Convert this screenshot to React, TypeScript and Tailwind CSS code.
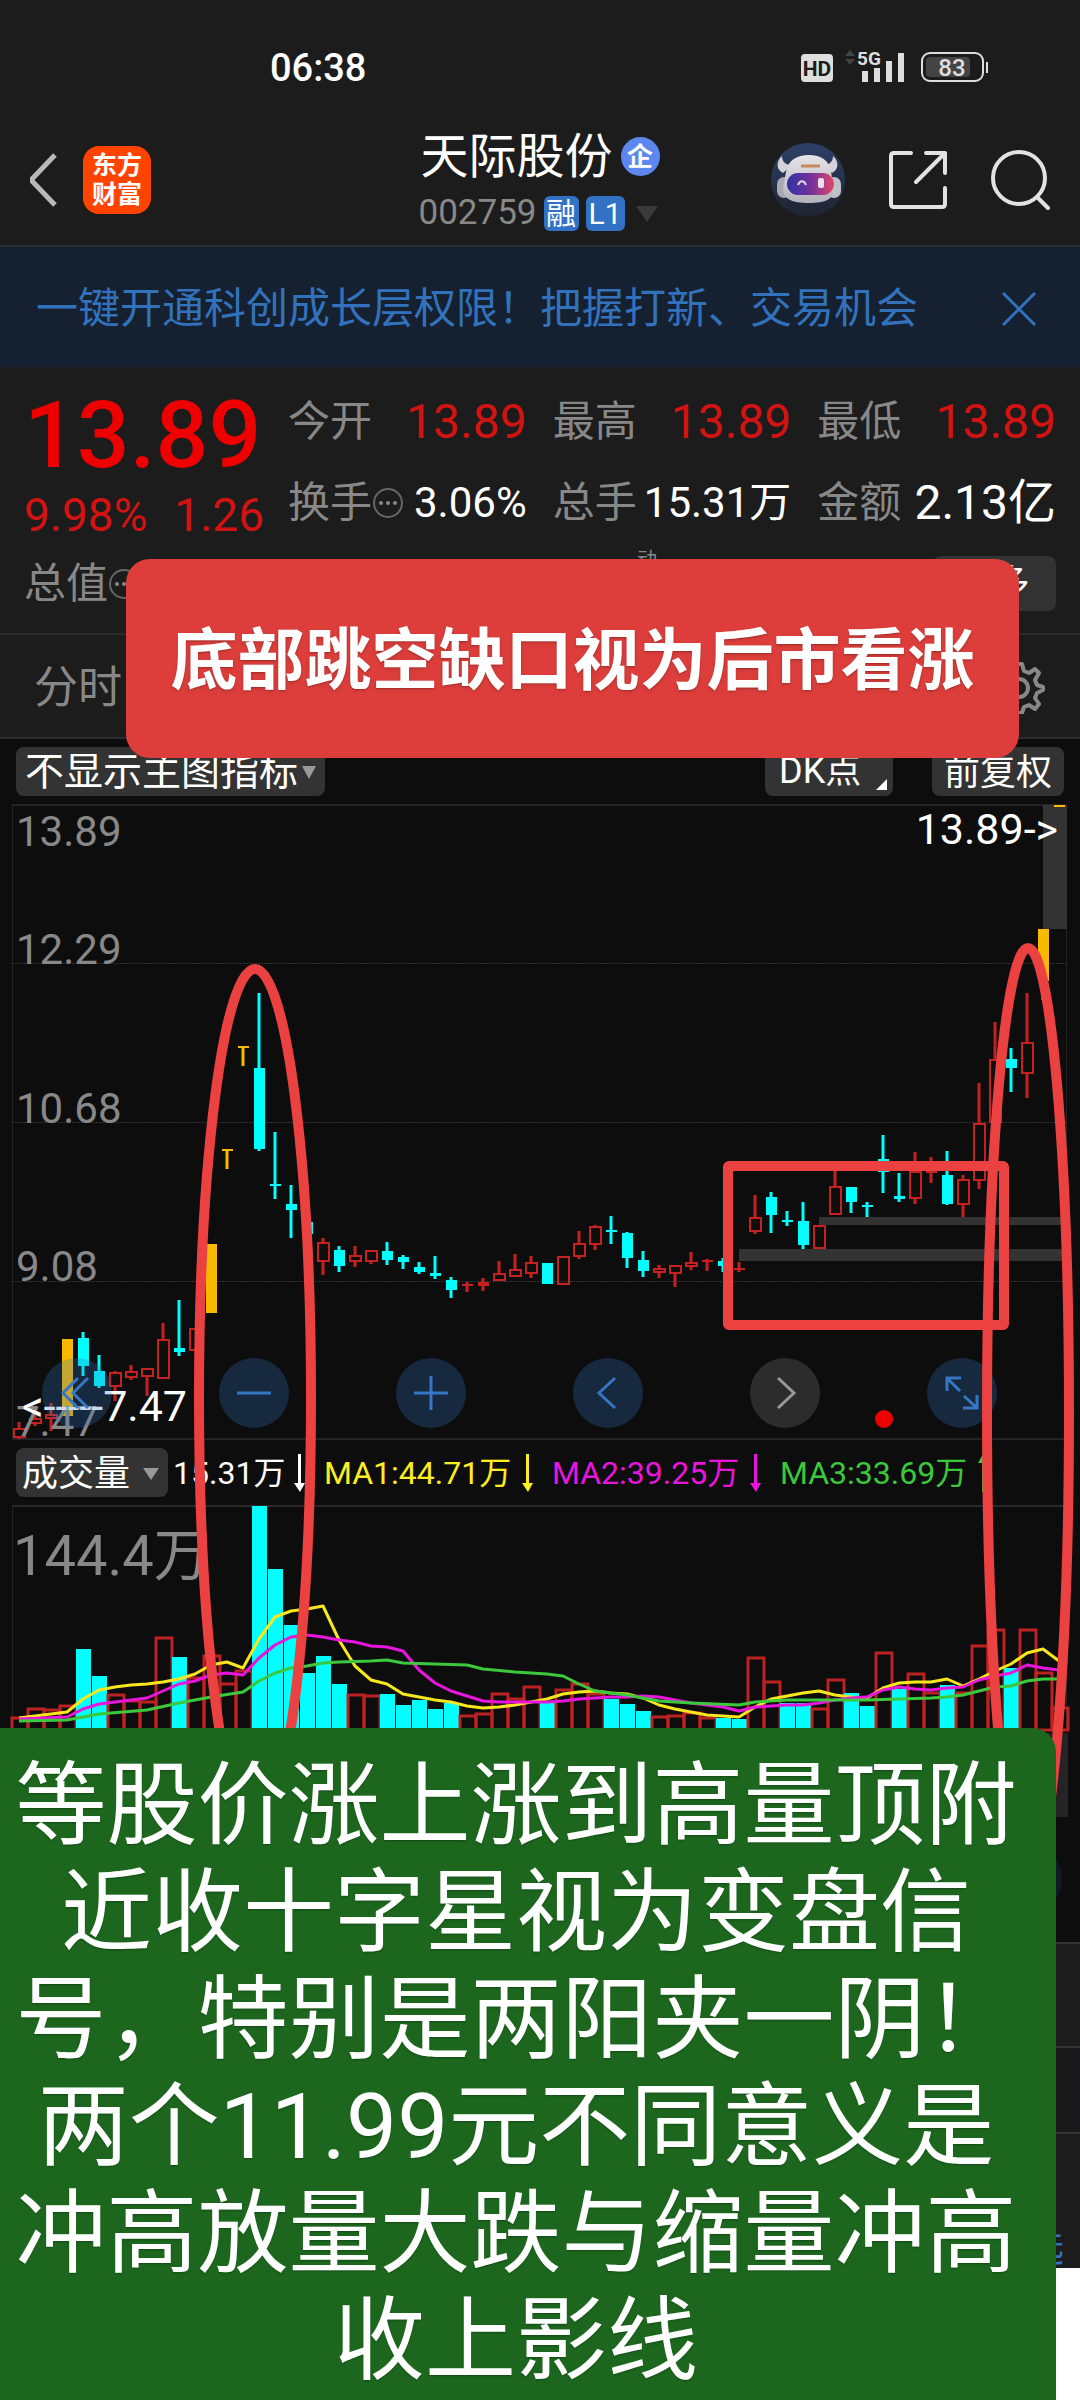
import type { ReactNode } from "react";

type Kind = "up" | "down" | "limit";

// kind, high, body top, body bottom, low, volume top
type Candle = [Kind, number, number, number, number, number];

const candles: Candle[] = [
  ["up", 1422, 1428, 1438, 1439, 1717],
  ["up", 1413, 1418, 1424, 1426, 1708],
  ["up", 1403, 1414, 1419, 1431, 1709],
  ["limit", 1339, 1339, 1416, 1416, 1705],
  ["down", 1332, 1338, 1366, 1376, 1649],
  ["down", 1355, 1371, 1386, 1388, 1676],
  ["up", 1371, 1372, 1387, 1401, 1694],
  ["up", 1365, 1371, 1378, 1380, 1700],
  ["up", 1368, 1368, 1377, 1396, 1701],
  ["up", 1323, 1339, 1379, 1379, 1637],
  ["down", 1300, 1348, 1352, 1356, 1657],
  ["up", 1328, 1328, 1351, 1351, 1677],
  ["limit", 1244, 1244, 1313, 1313, 1655],
  ["limit", 1149, 1149, 1151, 1169, 1683],
  ["limit", 1046, 1046, 1048, 1066, 1670],
  ["down", 993, 1068, 1149, 1151, 1506],
  ["down", 1132, 1184, 1186, 1199, 1569],
  ["down", 1185, 1204, 1210, 1238, 1625],
  ["down", 1222, 1222, 1234, 1234, 1673],
  ["up", 1238, 1242, 1262, 1275, 1656],
  ["down", 1246, 1250, 1266, 1272, 1684],
  ["up", 1246, 1255, 1262, 1267, 1694],
  ["up", 1250, 1250, 1262, 1264, 1695],
  ["down", 1242, 1251, 1260, 1265, 1694],
  ["down", 1255, 1257, 1262, 1269, 1705],
  ["down", 1262, 1267, 1272, 1274, 1700],
  ["down", 1256, 1273, 1276, 1279, 1709],
  ["down", 1277, 1280, 1290, 1298, 1703],
  ["up", 1282, 1284, 1286, 1292, 1715],
  ["up", 1278, 1282, 1286, 1291, 1713],
  ["up", 1261, 1273, 1281, 1281, 1693],
  ["up", 1254, 1269, 1277, 1277, 1698],
  ["up", 1256, 1262, 1274, 1278, 1686],
  ["down", 1263, 1263, 1284, 1284, 1703],
  ["up", 1256, 1256, 1285, 1285, 1689],
  ["up", 1231, 1243, 1257, 1259, 1683],
  ["up", 1225, 1226, 1245, 1250, 1693],
  ["down", 1216, 1230, 1232, 1244, 1699],
  ["down", 1232, 1233, 1258, 1268, 1704],
  ["down", 1251, 1260, 1271, 1277, 1711],
  ["up", 1265, 1268, 1273, 1278, 1716],
  ["up", 1265, 1265, 1274, 1287, 1715],
  ["up", 1252, 1262, 1267, 1270, 1712],
  ["up", 1259, 1260, 1262, 1271, 1717],
  ["down", 1258, 1261, 1266, 1272, 1718],
  ["down", 1262, 1268, 1270, 1272, 1719],
  ["up", 1195, 1217, 1232, 1234, 1657],
  ["up", 1192, 1197, 1215, 1233, 1681],
  ["down", 1211, 1220, 1222, 1226, 1703],
  ["down", 1202, 1221, 1245, 1249, 1703],
  ["up", 1225, 1225, 1249, 1249, 1708],
  ["up", 1169, 1186, 1215, 1215, 1679],
  ["down", 1187, 1187, 1202, 1213, 1693],
  ["down", 1202, 1205, 1207, 1217, 1706],
  ["up", 1135, 1159, 1172, 1193, 1652],
  ["down", 1173, 1196, 1199, 1202, 1689],
  ["up", 1152, 1171, 1199, 1204, 1673],
  ["up", 1157, 1171, 1173, 1183, 1692],
  ["down", 1151, 1175, 1204, 1205, 1685],
  ["up", 1175, 1179, 1205, 1217, 1692],
  ["up", 1083, 1123, 1181, 1189, 1645],
  ["up", 1022, 1059, 1123, 1123, 1629],
  ["down", 1048, 1059, 1068, 1092, 1668],
  ["up", 993, 1042, 1074, 1098, 1629],
  ["limit", 929, 929, 981, 1000, 1672],
  ["limit", 805, 805, 807, 807, 1707],
];

// sessions whose candle colour differs from the colour of their volume bar
const candleKind: Record<number, Kind> = { 45: "up", 47: "down", 54: "down" };
const volumeKind: Record<number, Kind> = { 19: "down" };

const ma1: [number, number][] = [
  [0, 1718], [3, 1712], [4, 1699], [5, 1690], [6, 1687], [7, 1685], [8, 1684], [9, 1682], [10, 1679], [11, 1674],
  [12, 1665], [13, 1662], [14, 1668], [15, 1639], [16, 1617], [17, 1611], [18, 1609], [19, 1606], [20, 1640],
  [21, 1666], [22, 1680], [23, 1684], [24, 1694], [25, 1697], [26, 1700], [27, 1702], [28, 1706], [29, 1708],
  [30, 1707], [31, 1705], [32, 1702], [33, 1699], [34, 1694], [35, 1692], [36, 1691], [37, 1693], [38, 1694],
  [39, 1698], [40, 1705], [41, 1709], [42, 1712], [43, 1715], [44, 1716], [45, 1717], [46, 1707], [47, 1699],
  [48, 1696], [49, 1693], [50, 1691], [51, 1695], [52, 1697], [53, 1698], [54, 1688], [55, 1683], [56, 1682],
  [57, 1682], [58, 1679], [59, 1686], [60, 1679], [61, 1671], [62, 1664], [63, 1653], [64, 1649], [65, 1661],
];

const ma2: [number, number][] = [
  [0, 1719], [3, 1717], [4, 1709], [5, 1704], [6, 1702], [7, 1700], [8, 1698], [9, 1691], [10, 1684], [11, 1681],
  [12, 1675], [13, 1673], [14, 1675], [15, 1658], [16, 1645], [17, 1637], [18, 1635], [19, 1637], [20, 1640],
  [21, 1642], [22, 1646], [23, 1647], [24, 1651], [25, 1670], [26, 1683], [27, 1691], [28, 1696], [29, 1701],
  [30, 1702], [33, 1702], [34, 1701], [35, 1699], [36, 1698], [37, 1697], [38, 1697], [39, 1696], [40, 1697],
  [41, 1700], [42, 1703], [43, 1705], [44, 1707], [45, 1711], [46, 1707], [47, 1706], [48, 1705], [49, 1705],
  [50, 1703], [51, 1700], [52, 1698], [53, 1697], [54, 1690], [55, 1687], [56, 1689], [57, 1690], [58, 1688],
  [59, 1687], [60, 1680], [61, 1676], [62, 1673], [63, 1665], [64, 1668], [65, 1670],
];

const ma3: [number, number][] = [
  [0, 1721], [3, 1720], [4, 1717], [5, 1714], [8, 1710], [10, 1703], [12, 1697], [14, 1692], [15, 1681], [16, 1673],
  [17, 1668], [18, 1666], [19, 1663], [20, 1662], [22, 1661], [23, 1660], [24, 1663], [26, 1664], [28, 1665],
  [29, 1669], [31, 1672], [33, 1674], [34, 1676], [35, 1684], [36, 1691], [38, 1695], [40, 1701], [42, 1703],
  [45, 1705], [46, 1702], [48, 1700], [51, 1700], [53, 1700], [55, 1699], [57, 1698], [58, 1697], [59, 1695],
  [60, 1691], [61, 1687], [62, 1686], [63, 1681], [64, 1679], [65, 1679],
];

const colors = { up: "#c62121", down: "#00ffff", limit: "#f8b900" };
const xOf = (i: number) => 19 + i * 16;
const toPoints = (line: [number, number][]) => line.map(([i, y]) => `${xOf(i)},${y}`).join(" ");

function CandleMark({ candle, index }: { candle: Candle; index: number }) {
  const [, high, top, bottom, low] = candle;
  const kind = candleKind[index] ?? candle[0];
  const x = xOf(index);
  const color = colors[kind];
  const hollow = kind === "up" && bottom - top > 4;
  return (
    <g stroke={color} strokeWidth="3" fill={color}>
      {high < top && <line x1={x} x2={x} y1={high} y2={top} />}
      {low > bottom && <line x1={x} x2={x} y1={bottom} y2={low} />}
      {hollow ? (
        <rect x={x - 5} y={top + 1} width="11" height={bottom - top - 2} fill="none" strokeWidth="2" />
      ) : (
        <rect x={x - 5} y={top} width="11" height={bottom - top} stroke="none" />
      )}
    </g>
  );
}

function PriceChart() {
  return (
    <svg viewBox="0 796 1080 644" className="block h-auto w-full overflow-visible" role="img" aria-label="日K线">
      <g stroke="#232325" strokeWidth="2" fill="none">
        <path d="M12 805H1067M12 1439H1067" />
        <path d="M12.500 805V1439M1066.500 805V1439" strokeWidth="1" />
        <path d="M12 963.500H1067M12 1122.500H1067M12 1281.500H1067" stroke="#333" strokeWidth="1" strokeDasharray="2 1" />
      </g>
      <g fill="#333">
        <rect x="1043" y="805" width="24" height="124" />
        <rect x="819" y="1217" width="248" height="8" />
        <rect x="739" y="1249" width="328" height="12" />
      </g>
      {candles.map((c, i) => (
        <CandleMark key={i} candle={c} index={i} />
      ))}
      <g fill="#888" fontSize="42">
        <text x="16" y="846">13.89</text>
        <text x="16" y="964">12.29</text>
        <text x="16" y="1123">10.68</text>
        <text x="16" y="1281">9.08</text>
        <text x="16" y="1436">7.47</text>
      </g>
      <g fill="#fff" fontSize="43" textAnchor="end">
        <text x="1058" y="844">13.89-&gt;</text>
        <text x="187" y="1421">&lt;-----7.47</text>
      </g>
      <circle cx="884" cy="1419" r="9" fill="#e00" />
    </svg>
  );
}

function VolumeChart() {
  return (
    <svg viewBox="0 1497 1080 445" className="block h-auto w-full" role="img" aria-label="成交量">
      <path d="M12 1506H1067" stroke="#29292b" strokeWidth="2" />
      <path d="M12.500 1506V1731M1066.500 1506V1731" stroke="#232325" />
      <rect x="12" y="1733" width="1056" height="84" fill="#242426" />
      <circle cx="1027" cy="1879" r="35" fill="#101a26" />
      <text x="13" y="1575" fontSize="56" fill="#888">144.4万</text>
      {candles.map(([kind, , , , , top], i) =>
        (volumeKind[i] ?? kind) === "down" ? (
          <rect key={i} x={xOf(i) - 7} y={top} width="15" height={1731 - top} fill="#00ffff" />
        ) : (
          <rect key={i} x={xOf(i) - 7} y={top + 1} width="16" height={1729 - top} fill="none" stroke="#bd2222" strokeWidth="3" />
        ),
      )}
      <g fill="none" strokeWidth="3" strokeLinejoin="round">
        <polyline points={toPoints(ma1)} stroke="#f8e71c" />
        <polyline points={toPoints(ma2)} stroke="#e815dc" />
        <polyline points={toPoints(ma3)} stroke="#3cc83c" />
      </g>
    </svg>
  );
}

// hand-drawn marks over both charts
function Annotations() {
  return (
    <svg viewBox="0 739 1080 1203" className="pointer-events-none absolute inset-x-0 top-0 h-auto w-full" aria-hidden="true">
      <g fill="none" stroke="#ec4141" strokeWidth="10">
        <ellipse cx="255" cy="1398" rx="56" ry="429" />
        <ellipse cx="1028" cy="1412" rx="41" ry="464" />
        <rect x="728" y="1166" width="276" height="159" rx="1" strokeLinejoin="round" />
      </g>
    </svg>
  );
}

function StatusBar() {
  return (
    <div className="flex items-center justify-between pt-[46px] pr-[92px] pl-[270px]">
      <time className="text-[38px] leading-[44px] font-medium text-white">06:38</time>
      <svg width="188" height="44" viewBox="0 0 188 44" className="text-[#dedede]" role="img" aria-label="HD 5G 83">
        <rect x="1" y="8" width="32" height="28" rx="4" fill="currentColor" />
        <text x="17" y="30" fontSize="21" fontWeight="700" fill="#1c1c1c" textAnchor="middle">HD</text>
        <path d="M45 10l5-6 5 6zM45 13l5 6 5-6z" fill="#444" />
        <text x="57" y="19" fontSize="19" fontWeight="700" fill="currentColor">5G</text>
        <path d="M65 25v11M77 22v14M89 15v21M101 7v29" stroke="currentColor" strokeWidth="6" />
        <rect x="122" y="7" width="61" height="28" rx="8" fill="none" stroke="currentColor" strokeWidth="2" />
        <rect x="126" y="11" width="44" height="20" rx="4" fill="#444" />
        <text x="152" y="30" fontSize="24" fontWeight="500" fill="currentColor" textAnchor="middle">83</text>
        <path d="M187 16v11" stroke="currentColor" strokeWidth="2" />
      </svg>
    </div>
  );
}

function RobotIcon() {
  return (
    <svg width="76" height="76" viewBox="0 0 76 76" aria-hidden="true">
      <defs>
        <linearGradient id="halo" x1="0" y1="0" x2="0" y2="1">
          <stop offset="0" stopColor="#2e4068" />
          <stop offset="1" stopColor="#1e2330" />
        </linearGradient>
        <linearGradient id="visor">
          <stop offset="0" stopColor="#3033a0" />
          <stop offset="50%" stopColor="#74309c" />
          <stop offset="1" stopColor="#e04a68" />
        </linearGradient>
        <linearGradient id="shell" x1="0" y1="0" x2="0" y2="1">
          <stop offset="0" stopColor="#e6e4e8" />
          <stop offset="1" stopColor="#b4b2ba" />
        </linearGradient>
      </defs>
      <circle cx="38" cy="38" r="37" fill="url(#halo)" />
      <path d="M12 14c-5 4-7 13 1 17l9-8c-6 0-10-3-10-9zM63 14c5 4 7 13-1 17l-9-8c6 0 10-3 10-9z" fill="#d4d2d8" />
      <rect x="7" y="35" width="14" height="21" rx="7" fill="#aaa8b2" />
      <rect x="57" y="35" width="14" height="21" rx="7" fill="#c2c0c8" />
      <path d="M16 30c2-12 11-17 23-17s20 5 22 17l3 16c0 11-8 15-25 15s-26-4-26-15z" fill="url(#shell)" />
      <rect x="17" y="31" width="47" height="22" rx="11" fill="url(#visor)" />
      <path d="M31 24h19" stroke="#c58a5c" strokeWidth="3" />
      <path d="M28 43c2-5 6-5 8 0" fill="none" stroke="#ddd" strokeWidth="2" />
      <rect x="48" y="36" width="6" height="10" rx="2" fill="#e6e0f0" />
    </svg>
  );
}

function Header() {
  return (
    <header className="border-b-2 border-[#2b2f33] bg-[#1c1c1c]">
      <StatusBar />
      <div className="grid h-[155px] grid-cols-[1fr_auto_1fr] items-center px-[30px]">
        <div className="flex items-center gap-[25px] pt-6">
          <button type="button" aria-label="返回">
            <svg width="28" height="56" viewBox="3 0 28 56" fill="none" stroke="#b9b9b9" strokeWidth="5">
              <path d="M28 3L4 28l24 25" />
            </svg>
          </button>
          <a href="#home" className="flex size-[68px] flex-col items-center justify-center rounded-2xl bg-[#ff4400] text-[25px] leading-[29px] font-bold text-white">
            <span>东方</span>
            <span>财富</span>
          </a>
        </div>
        <div className="flex flex-col items-center gap-1 pt-8">
          <h1 className="flex items-center gap-2 text-[48px] leading-[56px] text-white">
            天际股份
            <span className="flex size-[39px] items-center justify-center rounded-full bg-[#5b87ee] text-[26px] leading-none font-bold">企</span>
          </h1>
          <div className="flex h-[50px] items-center gap-[7px] text-[35px] text-[#888]">
            002759
            <span className="flex size-[35px] items-center justify-center rounded-md bg-[#3272c4] text-[30px] leading-none text-white">融</span>
            <span className="flex h-[35px] w-[39px] items-center justify-center rounded-md bg-[#3272c4] text-[30px] leading-none text-white">L1</span>
            <svg width="30" height="16" viewBox="0 0 30 16" fill="#3a3a3a" aria-hidden="true">
              <path d="M4 0h22L15 16z" />
            </svg>
          </div>
        </div>
        <div className="flex items-center justify-end gap-[43px] pt-6">
          <button type="button" aria-label="智能助手">
            <RobotIcon />
          </button>
          <button type="button" aria-label="分享">
            <svg width="58" height="58" viewBox="0 0 58 58" fill="none" stroke="#e2e2e2" strokeWidth="4" strokeLinecap="round" strokeLinejoin="round">
              <path d="M22 2H5Q2 2 2 5V53Q2 56 5 56H53Q56 56 56 53V37" />
              <path d="M37 2H56V22M55 3L27 31" />
            </svg>
          </button>
          <button type="button" aria-label="搜索">
            <svg width="60" height="60" viewBox="0 0 60 60" fill="none" stroke="#e2e2e2" strokeWidth="4" strokeLinecap="round">
              <circle cx="29" cy="28" r="26" />
              <path d="M47 47l11 11" />
            </svg>
          </button>
        </div>
      </div>
    </header>
  );
}

function Banner() {
  return (
    <div className="flex h-[120px] items-center justify-between bg-[#152130] pt-[3px] pr-[44px] pl-[36px] text-[42px] text-[#3272bc]">
      <a href="#open">一键开通科创成长层权限！把握打新、交易机会</a>
      <button type="button" aria-label="关闭">
        <svg width="34" height="34" viewBox="0 0 34 34" fill="none" stroke="currentColor" strokeWidth="3">
          <path d="M1 1l32 32M33 1L1 33" />
        </svg>
      </button>
    </div>
  );
}

function InfoDots() {
  return (
    <svg width="32" height="32" viewBox="0 0 32 32" fill="#888" aria-hidden="true">
      <circle cx="16" cy="16" r="14" fill="none" stroke="#666" strokeWidth="2" />
      <circle cx="9" cy="16" r="2" />
      <circle cx="16" cy="16" r="2" />
      <circle cx="23" cy="16" r="2" />
    </svg>
  );
}

function Stat({ label, children }: { label: ReactNode; children: ReactNode }) {
  return (
    <div className="flex h-[81px] items-center justify-between">
      <dt className="flex items-center text-[42px] text-[#888]">{label}</dt>
      <dd>{children}</dd>
    </div>
  );
}

function Quote() {
  return (
    <section className="border-b-2 border-[#2b2b2b] bg-[#1c1c1c] px-6 pt-[14px] pb-[9px]">
      <div className="flex gap-6">
        <div className="w-[240px] shrink-0">
          <p className="pt-[11px] text-[93px] leading-[88px] font-medium text-[#ee0000]">13.89</p>
          <p className="flex justify-between pt-[8px] text-[46px] leading-[54px] text-[#d31212]">
            <span>9.98%</span>
            <span>1.26</span>
          </p>
        </div>
        <dl className="grid grow grid-cols-3 gap-x-[26px] text-white">
          <Stat label="今开"><span className="text-[48px] text-[#d31212]">13.89</span></Stat>
          <Stat label="最高"><span className="text-[48px] text-[#d31212]">13.89</span></Stat>
          <Stat label="最低"><span className="text-[48px] text-[#d31212]">13.89</span></Stat>
          <Stat label={<>换手<InfoDots /></>}><span className="text-[42px]">3.06%</span></Stat>
          <Stat label="总手"><span className="text-[42px]">15.31万</span></Stat>
          <Stat label="金额"><span className="text-[48px]">2.13亿</span></Stat>
        </dl>
      </div>
      <div className="flex h-[81px] items-center text-[42px] text-[#888]">
        <span className="flex w-[529px] items-center">总值<InfoDots /></span>
        <span className="flex items-center">
          市盈
          <span className="self-start text-[20px] leading-4">动</span>
        </span>
        <button type="button" className="ml-auto h-[55px] w-[123px] rounded-lg bg-[#333] text-[35px] leading-none text-white">更多</button>
      </div>
    </section>
  );
}

function PeriodTabs() {
  return (
    <nav className="flex h-[104px] items-center justify-between border-b-2 border-[#2b2b2b] bg-[#1c1c1c] pt-1 pr-[35px] pl-[34px] text-[44px] text-[#888]">
      <a href="#minute">分时</a>
      <button type="button" aria-label="设置">
        <svg width="52" height="52" viewBox="0 0 52 52" fill="none" stroke="#888" strokeWidth="4" strokeLinejoin="round">
          <circle cx="26" cy="26" r="9" />
          <path d="M21 9l2-7h6l2 7 5 2 6-4 4 4-4 7 2 5 6 2v3l-6 3-2 5 4 6-4 5-6-4-5 2-2 6h-6l-2-6-5-2-6 4-4-5 4-6-2-5-6-3v-3l6-2 2-5-4-7 4-4 6 4z" />
        </svg>
      </button>
    </nav>
  );
}

const average = "flex w-[228px] shrink-0 items-center gap-[11px] text-[32px] whitespace-nowrap";

function Arrow({ up = false }: { up?: boolean }) {
  return (
    <svg width="11" height="38" viewBox="0 0 11 38" fill="currentColor" aria-hidden="true" className={up ? "rotate-180" : ""}>
      <path d="M4 0h3v29h4l-5 9L0 29h4z" />
    </svg>
  );
}

function RoundButton({ label, muted = false, children }: { label: string; muted?: boolean; children: ReactNode }) {
  return (
    <button
      type="button"
      aria-label={label}
      className={`flex size-[70px] items-center justify-center rounded-full ${muted ? "bg-[#2c2c2c] text-[#999]" : "bg-[#3577c4]/27 text-[#3577c4]"}`}
    >
      <svg width="34" height="34" viewBox="0 0 34 34" fill="none" stroke="currentColor" strokeWidth="3">
        {children}
      </svg>
    </button>
  );
}

function Charts() {
  return (
    <section className="relative bg-[#0d0d0d]">
      <div className="flex items-center px-4 pt-2 text-[36px] leading-[49px] text-white">
        <button type="button" className="flex h-[49px] w-[309px] items-center justify-center gap-1 rounded-lg bg-[#333] pt-[2px] text-[39px]">
          不显示主图指标
          <svg width="14" height="13" viewBox="0 0 14 13" fill="#999" aria-hidden="true"><path d="M0 0h14L7 13z" /></svg>
        </button>
        <button type="button" className="ml-auto flex h-[49px] w-[128px] items-end justify-between rounded-lg bg-[#333] pr-[6px] pl-[14px]">
          DK点
          <svg width="12" height="17" viewBox="0 0 12 17" fill="#fff" aria-hidden="true"><path d="M12 0v11H1z" /></svg>
        </button>
        <button type="button" className="ml-[39px] h-[49px] w-[132px] rounded-lg bg-[#333] pt-[2px]">前复权</button>
      </div>
      <div className="relative">
        <PriceChart />
        <div className="absolute right-[83px] bottom-[12px] left-[42px] flex justify-between">
          <RoundButton label="最左"><path d="M18 2L3 17l15 15M28 2L13 17l15 15" /></RoundButton>
          <RoundButton label="缩小"><path d="M0 17h34" /></RoundButton>
          <RoundButton label="放大"><path d="M0 17h34M17 0v34" /></RoundButton>
          <RoundButton label="左移"><path d="M24 2L8 17l16 15" /></RoundButton>
          <RoundButton label="右移" muted><path d="M10 2l16 15-16 15" /></RoundButton>
          <RoundButton label="全屏"><path d="M2 15V2h14M2 2l13 13M19 20l13 12M18 32h14V19" /></RoundButton>
        </div>
      </div>
      <div className="flex items-center overflow-hidden pt-2 pl-4 text-white">
        <button type="button" className="mr-[5px] flex h-[49px] w-[152px] shrink-0 items-center gap-[13px] rounded-lg bg-[#333] pt-[2px] pl-[6px] text-[36px] leading-none">
          成交量
          <svg width="16" height="12" viewBox="0 0 16 12" fill="#999" aria-hidden="true"><path d="M0 0h16L8 12z" /></svg>
        </button>
        <span className="flex w-[151px] shrink-0 items-center gap-[9px] text-[32px] whitespace-nowrap">15.31万<Arrow /></span>
        <span className={`${average} text-[#fcee21]`}>MA1:44.71万<Arrow /></span>
        <span className={`${average} text-[#e815dc]`}>MA2:39.25万<Arrow /></span>
        <span className={`${average} text-[#3cc83c]`}>MA3:33.69万<Arrow up /></span>
      </div>
      <VolumeChart />
      <Annotations />
    </section>
  );
}

export default function App() {
  return (
    <main className="relative overflow-hidden bg-white font-[Roboto,'Noto_Sans_CJK_SC',sans-serif]" lang="zh-CN">
      <Header />
      <Banner />
      <Quote />
      <PeriodTabs />
      <Charts />
      <div className="h-[104px] border-t-2 border-[#333] bg-[#1c1c1c]" />
      <div className="h-[86px] border-t-2 border-[#333] bg-[#18181a]" />
      <div className="flex h-[136px] items-end justify-end border-t-2 border-[#333] bg-[#1c1c1c] pr-4">
        <a href="#watch" className="text-[38px] leading-10 text-[#3272bc]">选</a>
      </div>
      <div className="h-[132px]" />

      <p className="absolute top-[559px] right-[61px] left-[126px] flex h-[199px] items-center justify-center rounded-3xl bg-[#dd3e3b] pt-[5px] text-[67px] font-bold whitespace-nowrap text-white text-shadow-md">
        底部跳空缺口视为后市看涨
      </p>
      <p className="absolute right-6 bottom-0 left-0 rounded-tr-3xl bg-[#1c661e] pt-[25px] pr-[38px] pb-[5px] pl-[14px] text-center text-[91px] leading-[107px] text-white text-shadow-sm">
        等股价涨上涨到高量顶附近收十字星视为变盘信号，特别是两阳夹一阴！两个11.99元不同意义是冲高放量大跌与缩量冲高收上影线
      </p>
    </main>
  );
}
